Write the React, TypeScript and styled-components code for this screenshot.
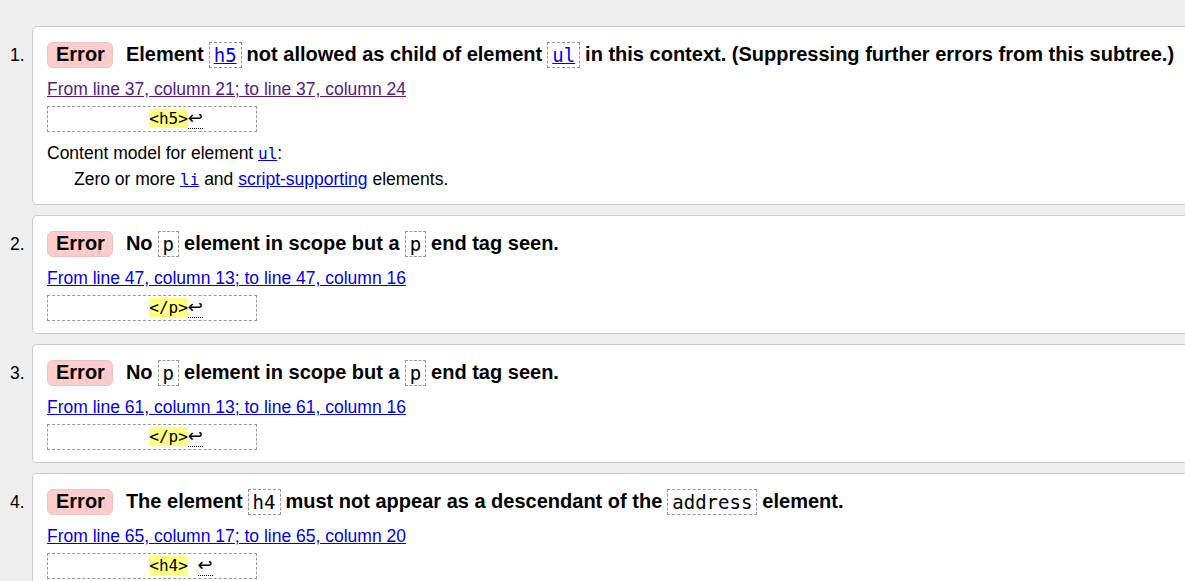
import React from "react";
import styled, { createGlobalStyle } from "styled-components";

const Global = createGlobalStyle`
  html, body { margin: 0; padding: 0; background: #eeeeee; overflow: hidden; }
  body { font-family: "Liberation Sans", Arial, sans-serif; color: #000; }
`;

const List = styled.ol`
  list-style: none;
  margin: 0;
  padding: 26px 0 0 0;
  width: 1220px;
`;

const Item = styled.li`
  display: flex;
  align-items: flex-start;
  margin-bottom: 10px;
`;

const Num = styled.div`
  width: 32px;
  flex: none;
  box-sizing: border-box;
  padding: 19px 0 0 10px;
  font-size: 17.5px;
  line-height: 20px;
`;

const Card = styled.div`
  flex: 1;
  background: #fff;
  border: 1px solid #cccccc;
  border-radius: 5px;
  padding: 14px 14px 12px 14px;
`;

const Message = styled.div`
  display: flex;
  align-items: center;
  height: 27px;
  font-size: 20px;
  font-weight: bold;
  white-space: pre;
`;

const Badge = styled.span`
  display: inline-flex;
  align-items: center;
  height: 24px;
  padding: 0 7px 0 8px;
  margin-right: 13px;
  background: #ffcccc;
  border: 1px solid #e8c4c4;
  border-radius: 6px;
  font-size: 20px;
  font-weight: bold;
`;

const CodeBox = styled.code`
  display: inline-flex;
  align-items: center;
  height: 24px;
  padding: 0 4px;
  margin: 0 5px;
  border: 1px dashed #999999;
  font-family: "DejaVu Sans Mono", monospace;
  font-size: 19px;
  font-weight: normal;
`;

const CodeLink = styled.a`
  color: #0000ee;
  text-decoration: underline;
`;

const Location = styled.a<{ $visited?: boolean }>`
  display: block;
  margin-top: 11px;
  font-size: 17.5px;
  line-height: 20px;
  color: ${(p) => (p.$visited ? "#551a8b" : "#0000ee")};
  text-decoration: underline;
  width: max-content;
`;

const Extract = styled.pre`
  box-sizing: border-box;
  width: 210px;
  height: 26px;
  margin: 7px 0 0 0;
  padding: 0 0 0 5px;
  border: 1px dashed #999999;
  font-family: "DejaVu Sans Mono", monospace;
  font-size: 16px;
  line-height: 24px;
  overflow: hidden;
`;

const Mark = styled.mark`
  background: #ffff80;
  color: #000;
`;

const Lf = styled.span`
  border-bottom: 1px dotted #000;
  font-family: "DejaVu Sans", sans-serif;
  font-size: 18px;
  line-height: 18px;
`;

const Para = styled.p`
  margin: 11px 0 0 0;
  font-size: 17.5px;
  line-height: 20px;
`;

const Indent = styled.p`
  margin: 5px 0 2px 27px;
  font-size: 17.5px;
  line-height: 20px;
`;

const MonoLink = styled.a`
  font-family: "DejaVu Sans Mono", monospace;
  font-size: 16px;
  color: #0000ee;
  text-decoration: underline;
`;

const TextLink = styled.a`
  color: #0000ee;
  text-decoration: underline;
`;

type Err = {
  msg: React.ReactNode;
  loc: string;
  visited?: boolean;
  extract: React.ReactNode;
  extra?: React.ReactNode;
};

const pad = "          ";

const errors: Err[] = [
  {
    msg: (
      <>
        Element<CodeBox><CodeLink>h5</CodeLink></CodeBox>not allowed as child of element<CodeBox><CodeLink>ul</CodeLink></CodeBox>in this context. (Suppressing further errors from this subtree.)
      </>
    ),
    loc: "From line 37, column 21; to line 37, column 24",
    visited: true,
    extract: (
      <>
        {pad}<Mark>&lt;h5&gt;</Mark><Lf>↩</Lf>
      </>
    ),
    extra: (
      <>
        <Para>
          Content model for element <MonoLink>ul</MonoLink>:
        </Para>
        <Indent>
          Zero or more <MonoLink>li</MonoLink> and <TextLink>script-supporting</TextLink> elements.
        </Indent>
      </>
    ),
  },
  {
    msg: (
      <>
        No<CodeBox>p</CodeBox>element in scope but a<CodeBox>p</CodeBox>end tag seen.
      </>
    ),
    loc: "From line 47, column 13; to line 47, column 16",
    extract: (
      <>
        {pad}<Mark>&lt;/p&gt;</Mark><Lf>↩</Lf>
      </>
    ),
  },
  {
    msg: (
      <>
        No<CodeBox>p</CodeBox>element in scope but a<CodeBox>p</CodeBox>end tag seen.
      </>
    ),
    loc: "From line 61, column 13; to line 61, column 16",
    extract: (
      <>
        {pad}<Mark>&lt;/p&gt;</Mark><Lf>↩</Lf>
      </>
    ),
  },
  {
    msg: (
      <>
        The element<CodeBox>h4</CodeBox>must not appear as a descendant of the<CodeBox>address</CodeBox>element.
      </>
    ),
    loc: "From line 65, column 17; to line 65, column 20",
    extract: (
      <>
        {pad}<Mark>&lt;h4&gt;</Mark> <Lf>↩</Lf>
      </>
    ),
  },
];

export default function App() {
  return (
    <>
      <Global />
      <List>
        {errors.map((e, i) => (
          <Item key={i}>
            <Num>{i + 1}.</Num>
            <Card>
              <Message>
                <Badge>Error</Badge>
                {e.msg}
              </Message>
              <Location $visited={e.visited}>{e.loc}</Location>
              <Extract>{e.extract}</Extract>
              {e.extra}
            </Card>
          </Item>
        ))}
      </List>
    </>
  );
}
